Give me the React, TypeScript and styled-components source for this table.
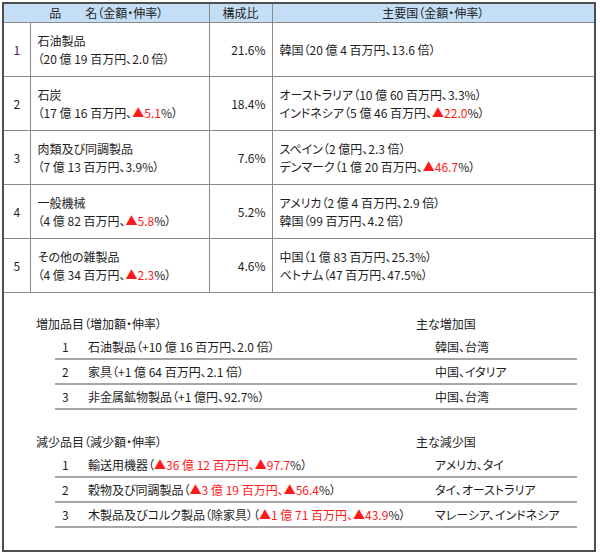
import React from "react";
import styled, { createGlobalStyle } from "styled-components";

type Part = string | { neg: string };

interface TopRow {
  no: number;
  name: Part[][];
  share: string;
  countries: Part[][];
}

interface ListItem {
  no: number;
  name: Part[];
  countries: string;
}

const topRows: TopRow[] = [
  {
    no: 1,
    name: [["石油製品"], ["（20 億 19 百万円、2.0 倍）"]],
    share: "21.6%",
    countries: [["韓国（20 億 4 百万円、13.6 倍）"]],
  },
  {
    no: 2,
    name: [["石炭"], ["（17 億 16 百万円、", { neg: "▲5.1" }, "%）"]],
    share: "18.4%",
    countries: [
      ["オーストラリア（10 億 60 百万円、3.3%）"],
      ["インドネシア（5 億 46 百万円、", { neg: "▲22.0" }, "%）"],
    ],
  },
  {
    no: 3,
    name: [["肉類及び同調製品"], ["（7 億 13 百万円、3.9%）"]],
    share: "7.6%",
    countries: [
      ["スペイン（2 億円、2.3 倍）"],
      ["デンマーク（1 億 20 百万円、", { neg: "▲46.7" }, "%）"],
    ],
  },
  {
    no: 4,
    name: [["一般機械"], ["（4 億 82 百万円、", { neg: "▲5.8" }, "%）"]],
    share: "5.2%",
    countries: [["アメリカ（2 億 4 百万円、2.9 倍）"], ["韓国（99 百万円、4.2 倍）"]],
  },
  {
    no: 5,
    name: [["その他の雑製品"], ["（4 億 34 百万円、", { neg: "▲2.3" }, "%）"]],
    share: "4.6%",
    countries: [["中国（1 億 83 百万円、25.3%）"], ["ベトナム（47 百万円、47.5%）"]],
  },
];

const increases: ListItem[] = [
  { no: 1, name: ["石油製品（+10 億 16 百万円、2.0 倍）"], countries: "韓国、台湾" },
  { no: 2, name: ["家具（+1 億 64 百万円、2.1 倍）"], countries: "中国、イタリア" },
  { no: 3, name: ["非金属鉱物製品（+1 億円、92.7%）"], countries: "中国、台湾" },
];

const decreases: ListItem[] = [
  {
    no: 1,
    name: ["輸送用機器（", { neg: "▲36 億 12 百万円、▲97.7" }, "%）"],
    countries: "アメリカ、タイ",
  },
  {
    no: 2,
    name: ["穀物及び同調製品（", { neg: "▲3 億 19 百万円、▲56.4" }, "%）"],
    countries: "タイ、オーストラリア",
  },
  {
    no: 3,
    name: ["木製品及びコルク製品（除家具）（", { neg: "▲1 億 71 百万円、▲43.9" }, "%）"],
    countries: "マレーシア、インドネシア",
  },
];

const GlobalStyle = createGlobalStyle`
  html, body {
    margin: 0;
    padding: 0;
    background: #ffffff;
  }
  body {
    font-family: "Noto Sans CJK JP", "Noto Sans", sans-serif;
    font-size: 12px;
    color: #1e1e1e;
    font-feature-settings: "palt";
  }
`;

const Page = styled.div`
  padding: 2px 0 0 2px;
`;

const Frame = styled.div`
  width: 594px;
  height: 550px;
  box-sizing: border-box;
  border: 2px solid #4d4d4d;
  display: flex;
  flex-direction: column;
`;

const Table = styled.table`
  width: 100%;
  border-collapse: collapse;
  table-layout: fixed;
`;

const HeadCell = styled.th`
  height: 18px;
  padding: 0;
  background: #c4dff5;
  font-weight: normal;
  text-align: center;
  line-height: 18px;
  border-bottom: 1px solid #8a8a8a;
  & + & {
    border-left: 1px solid #8a8a8a;
  }
`;

const Cell = styled.td<{ $align?: "left" | "center" | "right" }>`
  height: 53px;
  padding: 0 7px;
  vertical-align: middle;
  text-align: ${(p) => p.$align ?? "left"};
  line-height: 18px;
  border-bottom: 1px solid #8a8a8a;
  & + & {
    border-left: 1px solid #8a8a8a;
  }
`;

const NoCell = styled(Cell)<{ $tint?: boolean }>`
  padding: 0;
  color: ${(p) => (p.$tint ? "#4a2257" : "#1e1e1e")};
`;

const ShareCell = styled(Cell)`
  padding: 0 6px 0 0;
`;

const Neg = styled.span`
  color: #ff1a1a;
`;

const Line = styled.div`
  white-space: nowrap;
`;

const Lists = styled.div`
  padding: 18px 0 0 32px;
`;

const Block = styled.section`
  & + & {
    margin-top: 19px;
  }
`;

const BlockHead = styled.div`
  display: grid;
  grid-template-columns: 380px 1fr;
  height: 24px;
  align-items: center;
`;

const ItemList = styled.ol`
  list-style: none;
  margin: 0 0 0 19px;
  padding: 0;
  width: 522px;
`;

const Item = styled.li`
  display: grid;
  grid-template-columns: 26px 347px 1fr;
  height: 23px;
  align-items: center;
  padding-left: 7px;
  border-bottom: 2px solid #a6a6a6;
  white-space: nowrap;
`;

const renderParts = (parts: Part[]) =>
  parts.map((p, i) => (typeof p === "string" ? p : <Neg key={i}>{p.neg}</Neg>));

function ItemBlock({ title, countryTitle, items }: { title: string; countryTitle: string; items: ListItem[] }) {
  return (
    <Block>
      <BlockHead>
        <span>{title}</span>
        <span>{countryTitle}</span>
      </BlockHead>
      <ItemList>
        {items.map((it) => (
          <Item key={it.no}>
            <span>{it.no}</span>
            <span>{renderParts(it.name)}</span>
            <span>{it.countries}</span>
          </Item>
        ))}
      </ItemList>
    </Block>
  );
}

export default function App() {
  return (
    <Page>
      <GlobalStyle />
      <Frame>
        <Table>
          <colgroup>
            <col style={{ width: 26 }} />
            <col style={{ width: 179 }} />
            <col style={{ width: 63 }} />
            <col />
          </colgroup>
          <thead>
            <tr>
              <HeadCell colSpan={2}>品　　名（金額・伸率）</HeadCell>
              <HeadCell>構成比</HeadCell>
              <HeadCell>主要国（金額・伸率）</HeadCell>
            </tr>
          </thead>
          <tbody>
            {topRows.map((r) => (
              <tr key={r.no}>
                <NoCell $align="center" $tint={r.no === 1}>
                  {r.no}
                </NoCell>
                <Cell>
                  {r.name.map((l, i) => (
                    <Line key={i}>{renderParts(l)}</Line>
                  ))}
                </Cell>
                <ShareCell $align="right">{r.share}</ShareCell>
                <Cell>
                  {r.countries.map((l, i) => (
                    <Line key={i}>{renderParts(l)}</Line>
                  ))}
                </Cell>
              </tr>
            ))}
          </tbody>
        </Table>
        <Lists>
          <ItemBlock title="増加品目（増加額・伸率）" countryTitle="主な増加国" items={increases} />
          <ItemBlock title="減少品目（減少額・伸率）" countryTitle="主な減少国" items={decreases} />
        </Lists>
      </Frame>
    </Page>
  );
}
